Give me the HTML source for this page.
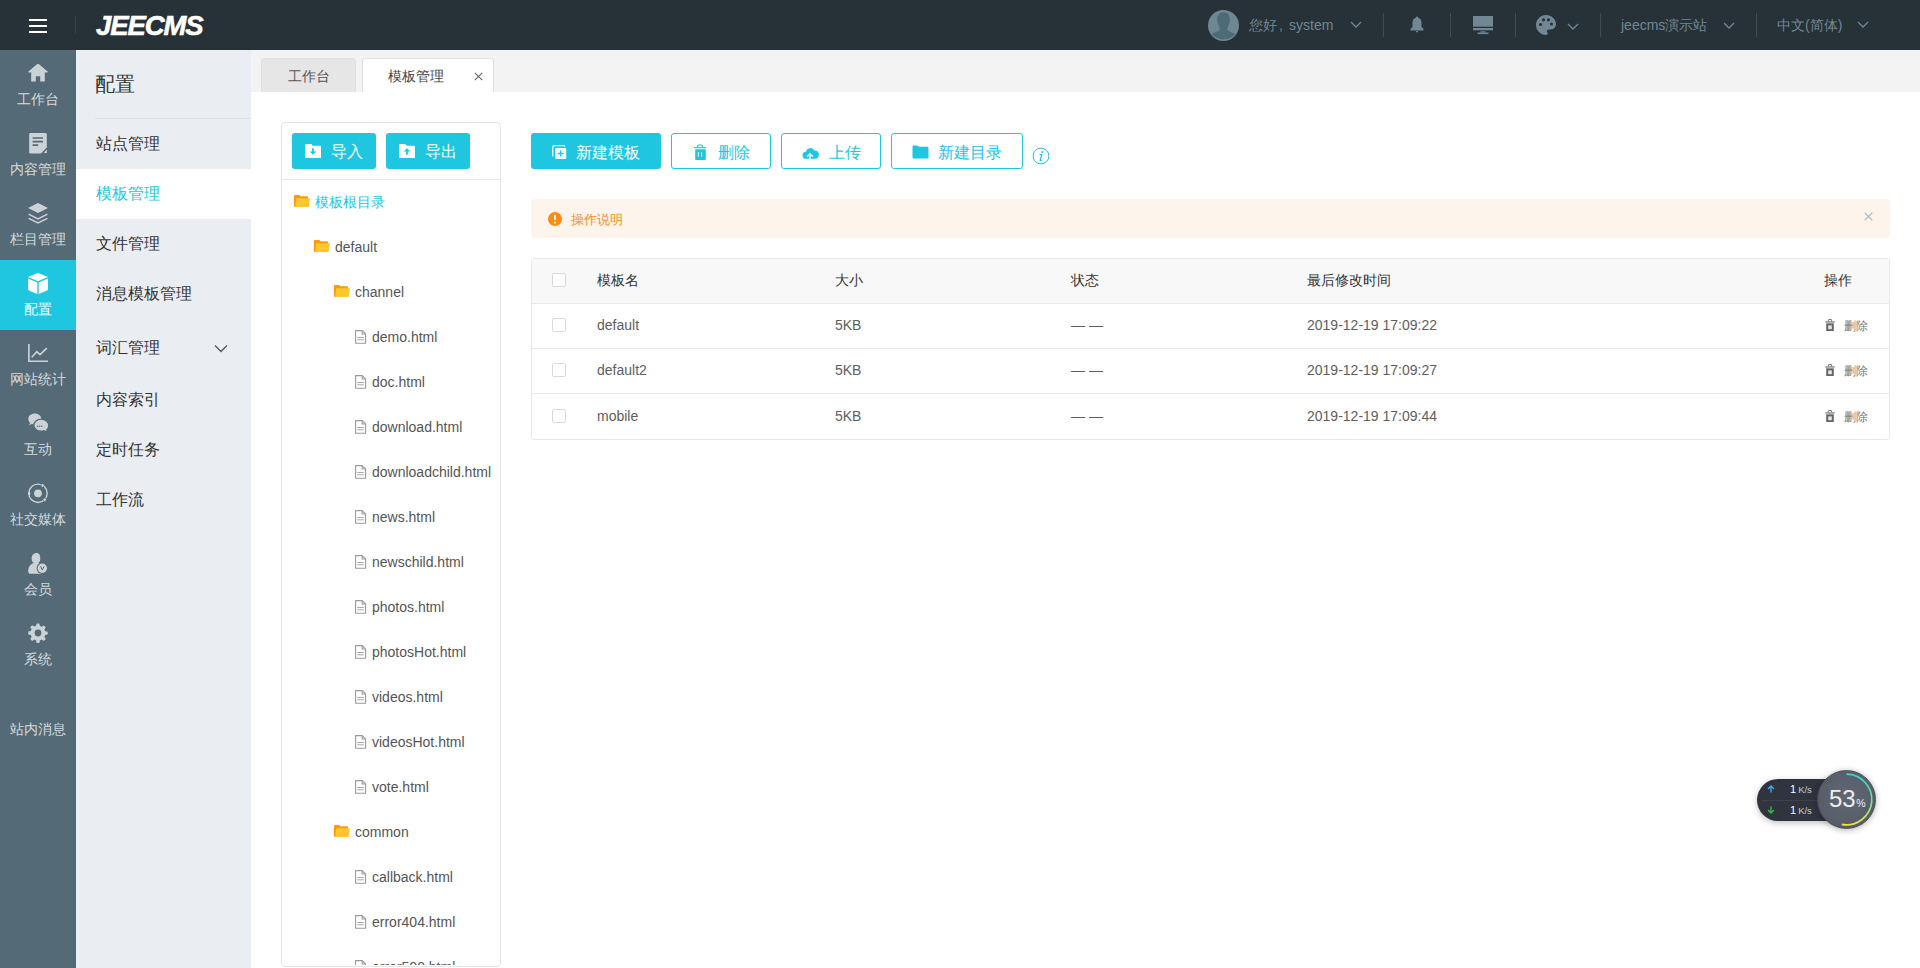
<!DOCTYPE html>
<html><head><meta charset="utf-8">
<style>
*{box-sizing:border-box;margin:0;padding:0}
html,body{width:1920px;height:968px;overflow:hidden;background:#fff;font-family:"Liberation Sans",sans-serif;color:#333}
.abs{position:absolute}
#hdr{position:absolute;left:0;top:0;width:1920px;height:50px;background:#263138}
#side{position:absolute;left:0;top:50px;width:76px;height:918px;background:#546a76}
#side2{position:absolute;left:76px;top:50px;width:175px;height:918px;background:#eaeef2}
#tabs{position:absolute;left:251px;top:50px;width:1669px;height:42px;background:#f3f3f3}
.nav{position:absolute;left:0;width:76px;height:70px;color:#d4dadd;font-size:14px;text-align:center}
.nav .lbl{position:absolute;left:0;width:76px;top:39.5px;line-height:18px}
.nav svg{position:absolute;left:28px;top:13.5px}
.s2{position:absolute;left:96px;font-size:16px;color:#333;line-height:20px;padding-top:1px}
.btn{position:absolute;top:133px;height:36px;border-radius:3px;font-size:16px;line-height:36px}
.btn span{padding-top:2px}
.fill{background:#1ec6df;color:#fff}
.out{border:1px solid #1ec6df;color:#1ec6df;line-height:34px}
.tr{position:absolute;font-size:14px;color:#555;line-height:18px;padding-top:1px}
.th{position:absolute;font-size:14px;color:#333;line-height:18px}
.td{position:absolute;font-size:14px;color:#5e5e5e;line-height:18px}
.cb{position:absolute;left:552px;width:14px;height:14px;border:1px solid #d9d9d9;border-radius:2px;background:#fff}
</style></head><body>
<div id="hdr">
 <div class="abs" style="left:29px;top:19px;width:18px;height:2px;background:#fff"></div>
 <div class="abs" style="left:29px;top:25px;width:18px;height:2px;background:#fff"></div>
 <div class="abs" style="left:29px;top:31px;width:18px;height:2px;background:#fff"></div>
 <div class="abs" style="left:75px;top:16px;width:1px;height:18px;background:#34424a"></div>
 <div class="abs" style="left:96px;top:10px;font-size:27.5px;font-weight:bold;font-style:italic;color:#fff;line-height:31px;letter-spacing:-1.1px;-webkit-text-stroke:0.6px #fff">JEECMS</div>
 <svg class="abs" style="left:1208px;top:10px" width="31" height="31" viewBox="0 0 31 31"><circle cx="15.5" cy="15.5" r="15.5" fill="#6e8793"/><path d="M15.5 2.2C11.3 2.2 9.2 5 9.2 9.2c0 2.4.5 4.3 1.3 5.8.7 1.4 1 2.6 1 4.2v1.2L3.6 24A15.5 15.5 0 0 0 27.4 24l-7.9-3.6v-1.2c0-1.6.3-2.8 1-4.2.8-1.5 1.3-3.4 1.3-5.8 0-4.2-2.1-7-6.3-7z" fill="#4f6a77"/></svg>
 <div class="abs" style="left:1249px;top:16px;font-size:14px;color:#718894;line-height:18px">您好<span style="display:inline-block;width:12px;padding-left:2px">,</span>system</div>
 <svg class="abs" style="left:1350px;top:21px" width="12" height="8" viewBox="0 0 12 8"><path d="M1 1l5 5 5-5" fill="none" stroke="#718894" stroke-width="1.3"/></svg>
 <div class="abs" style="left:1383px;top:13px;width:1px;height:24px;background:#3e4d55"></div>
 <svg class="abs" style="left:1410px;top:16px" width="14" height="18" viewBox="0 0 14 18"><circle cx="7" cy="1.6" r="1.1" fill="#718894"/><path d="M7 1.5c-2.9 0-4.5 2.3-4.5 5.2v4.4L.5 12.8v1.6h13v-1.6l-2-1.7V6.7C11.5 3.8 9.9 1.5 7 1.5z" fill="#718894"/><path d="M5.6 15h2.8L7 16.8z" fill="#718894"/></svg>
 <div class="abs" style="left:1450px;top:13px;width:1px;height:24px;background:#3e4d55"></div>
 <svg class="abs" style="left:1473px;top:16px" width="20" height="19" viewBox="0 0 20 19"><rect x="0" y="0" width="20" height="10.7" fill="#718894"/><rect x="0" y="12" width="20" height="2.3" fill="#718894"/><rect x="7.5" y="15.3" width="5" height="1.2" fill="#718894"/><rect x="4.5" y="16.5" width="11" height="1.6" fill="#718894"/></svg>
 <div class="abs" style="left:1515px;top:13px;width:1px;height:24px;background:#3e4d55"></div>
 <svg class="abs" style="left:1536px;top:15px" width="20" height="20" viewBox="0 0 20 20"><path d="M10 0C4.5 0 0 4.5 0 10s4.5 10 10 10c1 0 1.7-.8 1.7-1.7 0-.4-.2-.8-.4-1.1-.3-.3-.4-.7-.4-1.1 0-.9.8-1.7 1.7-1.7h2C18 14.4 20 12 20 9 20 4 15.5 0 10 0z" fill="#718894"/><circle cx="4.5" cy="9.5" r="1.6" fill="#263138"/><circle cx="7.5" cy="4.8" r="1.6" fill="#263138"/><circle cx="12.5" cy="4.8" r="1.6" fill="#263138"/><circle cx="15.5" cy="9" r="1.6" fill="#263138"/></svg>
 <svg class="abs" style="left:1567px;top:23px" width="12" height="8" viewBox="0 0 12 8"><path d="M1 1l5 5 5-5" fill="none" stroke="#718894" stroke-width="1.3"/></svg>
 <div class="abs" style="left:1600px;top:13px;width:1px;height:24px;background:#3e4d55"></div>
 <div class="abs" style="left:1621px;top:16px;font-size:14px;color:#718894;line-height:18px">jeecms演示站</div>
 <svg class="abs" style="left:1723px;top:21.5px" width="12" height="8" viewBox="0 0 12 8"><path d="M1 1l5 5 5-5" fill="none" stroke="#718894" stroke-width="1.3"/></svg>
 <div class="abs" style="left:1756px;top:13px;width:1px;height:24px;background:#3e4d55"></div>
 <div class="abs" style="left:1777px;top:16px;font-size:14px;color:#718894;line-height:18px">中文(简体)</div>
 <svg class="abs" style="left:1857px;top:21px" width="12" height="8" viewBox="0 0 12 8"><path d="M1 1l5 5 5-5" fill="none" stroke="#718894" stroke-width="1.3"/></svg>
</div>
<div id="side">
 <div class="nav" style="top:0px"><svg style="top:13px" width="20" height="20" viewBox="0 0 20 20"><path d="M10 .8q.6 0 1 .4l8.6 7.4q.5.8-.4.8h-2.4v9.2h-4.6v-5.4H7.8v5.4H3.2V9.4H.8q-.9 0-.4-.8L9 1.2q.4-.4 1-.4z" fill="#ccd3d7"/></svg><div class="lbl">工作台</div></div>
 <div class="nav" style="top:70px"><svg style="top:13px" width="20" height="21" viewBox="0 0 20 21"><path d="M2.6 0h14.8Q18.8 0 18.8 1.4V14.2L13 20.6H2.6Q1.2 20.6 1.2 19.2V1.4Q1.2 0 2.6 0z" fill="#ccd3d7"/><path d="M4.6 5h10.4M4.6 8.6h10.4M4.6 12.2h5.6" stroke="#546a76" stroke-width="1.7"/><path d="M19.4 15.2v5.6q0 .4-.4.4h-5.4z" fill="#546a76"/><path d="M18.8 16.6v3.4h-3.2z" fill="#ccd3d7"/></svg><div class="lbl">内容管理</div></div>
 <div class="nav" style="top:140px"><svg style="top:13px" width="20" height="21" viewBox="0 0 20 21"><path d="M10 0l10 5-10 5L0 5z" fill="#ccd3d7"/><path d="M.6 11.2L10 15.8l9.4-4.6M.6 15.4L10 20l9.4-4.6" fill="none" stroke="#ccd3d7" stroke-width="1.5"/></svg><div class="lbl">栏目管理</div></div>
 <div class="nav" style="top:210px;background:#1ec6df;color:#fff"><svg style="top:12.5px" width="20" height="21" viewBox="0 0 20 21"><path d="M10 0L20 4.1 10 8.3 0 4.1z" fill="#fff"/><path d="M0 5.6l9.3 3.9V21L.9 17.4Q0 17 0 16z" fill="#fff"/><path d="M20 5.6l-9.3 3.9V21l8.4-3.6Q20 17 20 16z" fill="#fff"/></svg><div class="lbl">配置</div></div>
 <div class="nav" style="top:280px"><svg style="top:13.5px" width="20" height="18" viewBox="0 0 20 18"><path d="M.9 0v17.2H20" fill="none" stroke="#ccd3d7" stroke-width="1.6"/><path d="M3.8 13.2l5-5.6 3.2 3 6.8-6.4" fill="none" stroke="#ccd3d7" stroke-width="1.6"/></svg><div class="lbl">网站统计</div></div>
 <div class="nav" style="top:350px"><svg style="top:13px" width="21" height="20" viewBox="0 0 21 20"><path d="M6.8 0.6C3.2 0.6 0.3 3 0.3 6c0 1.6.8 3 2 4L.6 12.1l3.6-1.2c.8.3 1.7.4 2.6.4 3.6 0 6.5-2.4 6.5-5.3S10.4.6 6.8.6z" fill="#ccd3d7"/><path d="M13.2 6.2c-4.1 0-7.4 2.7-7.4 6s3.3 6 7.4 6c.9 0 1.8-.1 2.6-.4l4.4 1.6-1.4-2.6c1.2-1.1 1.9-2.6 1.9-4.6 0-3.3-3.4-6-7.5-6z" fill="#ccd3d7" stroke="#546a76" stroke-width="1.3"/><circle cx="9.6" cy="13.2" r=".75" fill="#546a76"/><circle cx="11.7" cy="13.2" r=".75" fill="#546a76"/><circle cx="13.8" cy="13.2" r=".75" fill="#546a76"/></svg><div class="lbl">互动</div></div>
 <div class="nav" style="top:420px"><svg style="top:13px" width="21" height="21" viewBox="0 0 21 21"><circle cx="10" cy="10.3" r="9.2" fill="none" stroke="#ccd3d7" stroke-width="1.4"/><circle cx="10" cy="10.3" r="3.9" fill="#ccd3d7"/><circle cx="14.6" cy="2.4" r="1.7" fill="#ccd3d7" stroke="#546a76" stroke-width=".6"/><circle cx="0.9" cy="10.3" r="1.5" fill="#ccd3d7"/><circle cx="16.7" cy="16.7" r="1.7" fill="#ccd3d7" stroke="#546a76" stroke-width=".6"/></svg><div class="lbl">社交媒体</div></div>
 <div class="nav" style="top:490px"><svg style="top:12.5px" width="20" height="21" viewBox="0 0 20 21"><path d="M8.4 0C5.6 0 3.6 2.3 3.6 5.4c0 2 .8 3.7 2.1 4.7C2.6 11.2.6 13.6.2 17c-.2 1.6.2 3.8 1.8 3.8h11.6c1.6 0 2-1 2-3.4 0-3.6-2-6.2-5.4-7.3 1.3-1 2.1-2.7 2.1-4.7C12.3 2.3 11.2 0 8.4 0z" fill="#ccd3d7"/><circle cx="14.3" cy="15.3" r="5.7" fill="#546a76"/><circle cx="14.3" cy="15.3" r="4.7" fill="#ccd3d7"/><path d="M12.6 13.4l1.7 3.6 1.7-3.6" fill="none" stroke="#546a76" stroke-width="1"/></svg><div class="lbl">会员</div></div>
 <div class="nav" style="top:560px"><svg style="top:12.5px" width="20" height="20" viewBox="0 0 20 20"><path d="M8.6 0.5h2.8l.5 2.5 1.8.8 2.1-1.4 2 2-1.4 2.1.8 1.8 2.5.5v2.8l-2.5.5-.8 1.8 1.4 2.1-2 2-2.1-1.4-1.8.8-.5 2.5H8.6l-.5-2.5-1.8-.8-2.1 1.4-2-2 1.4-2.1-.8-1.8-2.5-.5V8.6l2.5-.5.8-1.8-1.4-2.1 2-2 2.1 1.4 1.8-.8z" fill="#ccd3d7"/><circle cx="10" cy="10" r="3.4" fill="#546a76"/></svg><div class="lbl">系统</div></div>
 <div class="nav" style="top:630px"><div class="lbl" style="top:40px">站内消息</div></div>
</div>
<div id="side2">
 <div class="abs" style="left:19px;top:22px;font-size:20px;color:#333;line-height:24px">配置</div>
 <div class="abs" style="left:19px;top:68px;width:156px;height:1px;background:#dde2e6"></div>
 <div class="abs" style="left:0;top:119px;width:175px;height:50px;background:#fff"></div>
</div>
<div class="s2" style="top:133px">站点管理</div>
<div class="s2" style="top:183px;color:#1ec6df">模板管理</div>
<div class="s2" style="top:233px">文件管理</div>
<div class="s2" style="top:283px">消息模板管理</div>
<div class="s2" style="top:337px">词汇管理</div>
<svg class="abs" style="left:214px;top:344px" width="14" height="9" viewBox="0 0 14 9"><path d="M1 1.5l6 6 6-6" fill="none" stroke="#555" stroke-width="1.3"/></svg>
<div class="s2" style="top:389px">内容索引</div>
<div class="s2" style="top:439px">定时任务</div>
<div class="s2" style="top:489px">工作流</div>
<div id="tabs">
 <div class="abs" style="left:10px;top:8px;width:95px;height:34px;background:#e6e6e6;border:1px solid #e0e0e0;border-bottom:none;border-radius:4px 4px 0 0;font-size:14px;color:#555;text-align:center;line-height:34px">工作台</div>
 <div class="abs" style="left:111px;top:8px;width:132px;height:34px;background:#fff;border:1px solid #e0e0e0;border-bottom:none;border-radius:4px 4px 0 0;font-size:14px;color:#444;line-height:34px"><span class="abs" style="left:25px;top:0">模板管理</span><svg class="abs" style="left:111px;top:13px" width="9" height="9" viewBox="0 0 9 9"><path d="M.8 .8l7.4 7.4M8.2 .8L.8 8.2" stroke="#666" stroke-width="1.1"/></svg></div>
</div>
<div class="abs" style="left:281px;top:122px;width:220px;height:845px;border:1px solid #e5e5e5;border-radius:4px;background:#fff"></div>
<div class="abs" style="left:0;top:0;width:1920px;height:965px;overflow:hidden">
<div class="abs" style="left:282px;top:179px;width:218px;height:1px;background:#e8e8e8"></div>
<div class="btn fill" style="left:292px;width:84px"><svg class="abs" style="left:13px;top:11px" width="16" height="14" viewBox="0 0 16 14"><path d="M0 0.6Q0 0 .6 0h5.6l1.6 1.8h7.6q.6 0 .6.6V13.4q0 .6-.6.6H.6Q0 14 0 13.4z" fill="#fff"/><path d="M7.1 4.2h1.8v3.2h2.4L8 10.8 4.7 7.4h2.4z" fill="#1ec6df"/></svg><span class="abs" style="left:39px;top:0;padding-top:1px">导入</span></div>
<div class="btn fill" style="left:386px;width:84px"><svg class="abs" style="left:13px;top:11px" width="16" height="14" viewBox="0 0 16 14"><path d="M0 0.6Q0 0 .6 0h5.6l1.6 1.8h7.6q.6 0 .6.6V13.4q0 .6-.6.6H.6Q0 14 0 13.4z" fill="#fff"/><path d="M7.1 10.8h1.8V7.6h2.4L8 4.2 4.7 7.6h2.4z" fill="#1ec6df"/></svg><span class="abs" style="left:39px;top:0;padding-top:1px">导出</span></div>
<svg class="abs" style="left:294px;top:195px" width="16" height="12" viewBox="0 0 16 12"><path d="M0 1Q0 0 1 0h4.2l1.3 1.2H13q1 0 1 1V12H1q-1 0-1-1z" fill="#fb9a0c"/><path d="M2.2 3.2H15.3q.8 0 .6.8L14.6 12H1.2z" fill="#ffc72e"/></svg>
<div class="tr" style="left:315px;top:192px;color:#1ec6df">模板根目录</div>
<svg class="abs" style="left:314px;top:240px" width="16" height="12" viewBox="0 0 16 12"><path d="M0 1Q0 0 1 0h4.2l1.3 1.2H13q1 0 1 1V12H1q-1 0-1-1z" fill="#fb9a0c"/><path d="M2.2 3.2H15.3q.8 0 .6.8L14.6 12H1.2z" fill="#ffc72e"/></svg>
<div class="tr" style="left:335px;top:237px">default</div>
<svg class="abs" style="left:334px;top:285px" width="16" height="12" viewBox="0 0 16 12"><path d="M0 1Q0 0 1 0h4.2l1.3 1.2H13q1 0 1 1V12H1q-1 0-1-1z" fill="#fb9a0c"/><path d="M2.2 3.2H15.3q.8 0 .6.8L14.6 12H1.2z" fill="#ffc72e"/></svg>
<div class="tr" style="left:355px;top:282px">channel</div>
<svg class="abs" style="left:355px;top:330px" width="12" height="14" viewBox="0 0 12 14"><path d="M0.6 0.6H7.2L10.6 4V13.2H0.6z" fill="none" stroke="#9a9a9a" stroke-width="1.1" stroke-linejoin="round"/><path d="M7.2 0.6V4H10.6" fill="none" stroke="#9a9a9a" stroke-width="1.1"/><path d="M2.2 7.5h6.6M2.2 9.8h6.6" stroke="#aaa" stroke-width="1"/></svg>
<div class="tr" style="left:372px;top:327px">demo.html</div>
<svg class="abs" style="left:355px;top:375px" width="12" height="14" viewBox="0 0 12 14"><path d="M0.6 0.6H7.2L10.6 4V13.2H0.6z" fill="none" stroke="#9a9a9a" stroke-width="1.1" stroke-linejoin="round"/><path d="M7.2 0.6V4H10.6" fill="none" stroke="#9a9a9a" stroke-width="1.1"/><path d="M2.2 7.5h6.6M2.2 9.8h6.6" stroke="#aaa" stroke-width="1"/></svg>
<div class="tr" style="left:372px;top:372px">doc.html</div>
<svg class="abs" style="left:355px;top:420px" width="12" height="14" viewBox="0 0 12 14"><path d="M0.6 0.6H7.2L10.6 4V13.2H0.6z" fill="none" stroke="#9a9a9a" stroke-width="1.1" stroke-linejoin="round"/><path d="M7.2 0.6V4H10.6" fill="none" stroke="#9a9a9a" stroke-width="1.1"/><path d="M2.2 7.5h6.6M2.2 9.8h6.6" stroke="#aaa" stroke-width="1"/></svg>
<div class="tr" style="left:372px;top:417px">download.html</div>
<svg class="abs" style="left:355px;top:465px" width="12" height="14" viewBox="0 0 12 14"><path d="M0.6 0.6H7.2L10.6 4V13.2H0.6z" fill="none" stroke="#9a9a9a" stroke-width="1.1" stroke-linejoin="round"/><path d="M7.2 0.6V4H10.6" fill="none" stroke="#9a9a9a" stroke-width="1.1"/><path d="M2.2 7.5h6.6M2.2 9.8h6.6" stroke="#aaa" stroke-width="1"/></svg>
<div class="tr" style="left:372px;top:462px">downloadchild.html</div>
<svg class="abs" style="left:355px;top:510px" width="12" height="14" viewBox="0 0 12 14"><path d="M0.6 0.6H7.2L10.6 4V13.2H0.6z" fill="none" stroke="#9a9a9a" stroke-width="1.1" stroke-linejoin="round"/><path d="M7.2 0.6V4H10.6" fill="none" stroke="#9a9a9a" stroke-width="1.1"/><path d="M2.2 7.5h6.6M2.2 9.8h6.6" stroke="#aaa" stroke-width="1"/></svg>
<div class="tr" style="left:372px;top:507px">news.html</div>
<svg class="abs" style="left:355px;top:555px" width="12" height="14" viewBox="0 0 12 14"><path d="M0.6 0.6H7.2L10.6 4V13.2H0.6z" fill="none" stroke="#9a9a9a" stroke-width="1.1" stroke-linejoin="round"/><path d="M7.2 0.6V4H10.6" fill="none" stroke="#9a9a9a" stroke-width="1.1"/><path d="M2.2 7.5h6.6M2.2 9.8h6.6" stroke="#aaa" stroke-width="1"/></svg>
<div class="tr" style="left:372px;top:552px">newschild.html</div>
<svg class="abs" style="left:355px;top:600px" width="12" height="14" viewBox="0 0 12 14"><path d="M0.6 0.6H7.2L10.6 4V13.2H0.6z" fill="none" stroke="#9a9a9a" stroke-width="1.1" stroke-linejoin="round"/><path d="M7.2 0.6V4H10.6" fill="none" stroke="#9a9a9a" stroke-width="1.1"/><path d="M2.2 7.5h6.6M2.2 9.8h6.6" stroke="#aaa" stroke-width="1"/></svg>
<div class="tr" style="left:372px;top:597px">photos.html</div>
<svg class="abs" style="left:355px;top:645px" width="12" height="14" viewBox="0 0 12 14"><path d="M0.6 0.6H7.2L10.6 4V13.2H0.6z" fill="none" stroke="#9a9a9a" stroke-width="1.1" stroke-linejoin="round"/><path d="M7.2 0.6V4H10.6" fill="none" stroke="#9a9a9a" stroke-width="1.1"/><path d="M2.2 7.5h6.6M2.2 9.8h6.6" stroke="#aaa" stroke-width="1"/></svg>
<div class="tr" style="left:372px;top:642px">photosHot.html</div>
<svg class="abs" style="left:355px;top:690px" width="12" height="14" viewBox="0 0 12 14"><path d="M0.6 0.6H7.2L10.6 4V13.2H0.6z" fill="none" stroke="#9a9a9a" stroke-width="1.1" stroke-linejoin="round"/><path d="M7.2 0.6V4H10.6" fill="none" stroke="#9a9a9a" stroke-width="1.1"/><path d="M2.2 7.5h6.6M2.2 9.8h6.6" stroke="#aaa" stroke-width="1"/></svg>
<div class="tr" style="left:372px;top:687px">videos.html</div>
<svg class="abs" style="left:355px;top:735px" width="12" height="14" viewBox="0 0 12 14"><path d="M0.6 0.6H7.2L10.6 4V13.2H0.6z" fill="none" stroke="#9a9a9a" stroke-width="1.1" stroke-linejoin="round"/><path d="M7.2 0.6V4H10.6" fill="none" stroke="#9a9a9a" stroke-width="1.1"/><path d="M2.2 7.5h6.6M2.2 9.8h6.6" stroke="#aaa" stroke-width="1"/></svg>
<div class="tr" style="left:372px;top:732px">videosHot.html</div>
<svg class="abs" style="left:355px;top:780px" width="12" height="14" viewBox="0 0 12 14"><path d="M0.6 0.6H7.2L10.6 4V13.2H0.6z" fill="none" stroke="#9a9a9a" stroke-width="1.1" stroke-linejoin="round"/><path d="M7.2 0.6V4H10.6" fill="none" stroke="#9a9a9a" stroke-width="1.1"/><path d="M2.2 7.5h6.6M2.2 9.8h6.6" stroke="#aaa" stroke-width="1"/></svg>
<div class="tr" style="left:372px;top:777px">vote.html</div>
<svg class="abs" style="left:334px;top:825px" width="16" height="12" viewBox="0 0 16 12"><path d="M0 1Q0 0 1 0h4.2l1.3 1.2H13q1 0 1 1V12H1q-1 0-1-1z" fill="#fb9a0c"/><path d="M2.2 3.2H15.3q.8 0 .6.8L14.6 12H1.2z" fill="#ffc72e"/></svg>
<div class="tr" style="left:355px;top:822px">common</div>
<svg class="abs" style="left:355px;top:870px" width="12" height="14" viewBox="0 0 12 14"><path d="M0.6 0.6H7.2L10.6 4V13.2H0.6z" fill="none" stroke="#9a9a9a" stroke-width="1.1" stroke-linejoin="round"/><path d="M7.2 0.6V4H10.6" fill="none" stroke="#9a9a9a" stroke-width="1.1"/><path d="M2.2 7.5h6.6M2.2 9.8h6.6" stroke="#aaa" stroke-width="1"/></svg>
<div class="tr" style="left:372px;top:867px">callback.html</div>
<svg class="abs" style="left:355px;top:915px" width="12" height="14" viewBox="0 0 12 14"><path d="M0.6 0.6H7.2L10.6 4V13.2H0.6z" fill="none" stroke="#9a9a9a" stroke-width="1.1" stroke-linejoin="round"/><path d="M7.2 0.6V4H10.6" fill="none" stroke="#9a9a9a" stroke-width="1.1"/><path d="M2.2 7.5h6.6M2.2 9.8h6.6" stroke="#aaa" stroke-width="1"/></svg>
<div class="tr" style="left:372px;top:912px">error404.html</div>
<svg class="abs" style="left:355px;top:960px" width="12" height="14" viewBox="0 0 12 14"><path d="M0.6 0.6H7.2L10.6 4V13.2H0.6z" fill="none" stroke="#9a9a9a" stroke-width="1.1" stroke-linejoin="round"/><path d="M7.2 0.6V4H10.6" fill="none" stroke="#9a9a9a" stroke-width="1.1"/><path d="M2.2 7.5h6.6M2.2 9.8h6.6" stroke="#aaa" stroke-width="1"/></svg>
<div class="tr" style="left:372px;top:957px">error500.html</div>
</div>
<div class="btn fill" style="left:531px;width:130px"><svg class="abs" style="left:21px;top:12px" width="16" height="15" viewBox="0 0 16 15"><path d="M0.8 11.5V2.2Q0.8 0.6 2.4 0.6H11.6Q12.4 0.6 12.6 1.6" fill="none" stroke="#fff" stroke-width="1.2"/><rect x="3.2" y="3.1" width="11" height="10.8" rx="1.2" fill="#fff"/><path d="M8.7 5.6v5.8M5.8 8.5h5.8" stroke="#1ec6df" stroke-width="1.3"/></svg><span class="abs" style="left:45px;top:0">新建模板</span></div>
<div class="btn out" style="left:671px;width:100px"><svg class="abs" style="left:21px;top:10px" width="14" height="17" viewBox="0 0 14 17"><path d="M4.6 3.6V2.2Q4.6 1 5.8 1h2.4Q9.4 1 9.4 2.2v1.4" fill="none" stroke="#1ec6df" stroke-width="1.2"/><path d="M0.8 3.7h12.4" stroke="#1ec6df" stroke-width="1.1"/><rect x="2.2" y="5.2" width="10.6" height="10.8" rx="0.8" fill="#1ec6df"/><path d="M5.4 8.3v4.4M8.6 8.3v4.4" stroke="#fff" stroke-width="1"/></svg><span class="abs" style="left:46px;top:0">删除</span></div>
<div class="btn out" style="left:781px;width:100px"><svg class="abs" style="left:20px;top:13px" width="17" height="12" viewBox="0 0 17 12"><path d="M4.2 11.8A3.5 3.5 0 0 1 3.9 4.8 4.6 4.6 0 0 1 12.5 3.6 3.8 3.8 0 0 1 13 11.8z" fill="#1ec6df"/><path d="M8 12V6.8M5.2 9.6L8 6.8l2.8 2.8" fill="none" stroke="#e6f8fb" stroke-width="1.5"/></svg><span class="abs" style="left:47px;top:0">上传</span></div>
<div class="btn out" style="left:891px;width:132px"><svg class="abs" style="left:20px;top:11px" width="17" height="14" viewBox="0 0 17 14"><path d="M0.5 1.5Q0.5 0.5 1.5 0.5h4l1.2 1.2h8.8Q16.5 1.7 16.5 2.8V12.5Q16.5 13.5 15.5 13.5H1.5Q0.5 13.5 0.5 12.5z" fill="#1ec6df"/></svg><span class="abs" style="left:46px;top:0">新建目录</span></div>
<svg class="abs" style="left:1032px;top:147px" width="18" height="18" viewBox="0 0 18 18"><circle cx="9" cy="9" r="7.9" fill="none" stroke="#1ec6df" stroke-width="1"/><circle cx="10.3" cy="4.9" r="1" fill="#1ec6df"/><path d="M7.6 7.6h2.2l-1.5 5.2q-.2.8.6.6l.9-.3" fill="none" stroke="#1ec6df" stroke-width="1.3"/></svg>

<div class="abs" style="left:531px;top:199px;width:1359px;height:39px;background:#fdf4eb;border-radius:3px"></div>
<svg class="abs" style="left:548px;top:212px" width="14" height="14" viewBox="0 0 14 14"><circle cx="7" cy="7" r="7" fill="#fa8c16"/><path d="M7 3v5" stroke="#fff" stroke-width="1.8"/><circle cx="7" cy="10.5" r="1" fill="#fff"/></svg>
<div class="abs" style="left:571px;top:211px;font-size:13px;color:#fa8c16;line-height:17px">操作说明</div>
<svg class="abs" style="left:1864px;top:212px" width="9" height="9" viewBox="0 0 9 9"><path d="M.7 .7l7.6 7.6M8.3 .7l-7.6 7.6" stroke="#b9bcc0" stroke-width="1.3"/></svg>

<div class="abs" style="left:531px;top:258px;width:1359px;height:182px;border:1px solid #e8e8e8;border-radius:3px;background:#fff"></div>
<div class="abs" style="left:532px;top:259px;width:1357px;height:44px;background:#f8f8f8"></div>
<div class="abs" style="left:532px;top:303px;width:1357px;height:1px;background:#e8e8e8"></div>
<div class="abs" style="left:532px;top:348px;width:1357px;height:1px;background:#e8e8e8"></div>
<div class="abs" style="left:532px;top:393px;width:1357px;height:1px;background:#e8e8e8"></div>
<div class="cb" style="top:273px"></div>
<div class="th" style="left:597px;top:271px">模板名</div>
<div class="th" style="left:835px;top:271px">大小</div>
<div class="th" style="left:1071px;top:271px">状态</div>
<div class="th" style="left:1307px;top:271px">最后修改时间</div>
<div class="th" style="left:1824px;top:271px">操作</div>
<div class="cb" style="top:318px"></div><div class="td" style="left:597px;top:316px">default</div><div class="td" style="left:835px;top:316px">5KB</div><div class="td" style="left:1071px;top:316px">— —</div><div class="td" style="left:1307px;top:316px">2019-12-19 17:09:22</div><svg class="abs" style="left:1825px;top:319px" width="10" height="12" viewBox="0 0 10 12"><path d="M3.4 2.2V1.2Q3.4.5 4.1.5h1.8q.7 0 .7.7v1" fill="none" stroke="#666" stroke-width="1"/><path d="M.3 2.4h9.4v1.1H.3z" fill="#666"/><path d="M1.2 4.3h7.6V12H1.2z" fill="#666"/><path d="M3.2 6.4h3.6v3.8H3.2z" fill="#e6e6e6"/></svg><div class="td" style="left:1844px;top:317px;font-size:12px;color:#777">删除</div><div class="cb" style="top:363px"></div><div class="td" style="left:597px;top:361px">default2</div><div class="td" style="left:835px;top:361px">5KB</div><div class="td" style="left:1071px;top:361px">— —</div><div class="td" style="left:1307px;top:361px">2019-12-19 17:09:27</div><svg class="abs" style="left:1825px;top:364px" width="10" height="12" viewBox="0 0 10 12"><path d="M3.4 2.2V1.2Q3.4.5 4.1.5h1.8q.7 0 .7.7v1" fill="none" stroke="#666" stroke-width="1"/><path d="M.3 2.4h9.4v1.1H.3z" fill="#666"/><path d="M1.2 4.3h7.6V12H1.2z" fill="#666"/><path d="M3.2 6.4h3.6v3.8H3.2z" fill="#e6e6e6"/></svg><div class="td" style="left:1844px;top:362px;font-size:12px;color:#777">删除</div><div class="cb" style="top:409px"></div><div class="td" style="left:597px;top:407px">mobile</div><div class="td" style="left:835px;top:407px">5KB</div><div class="td" style="left:1071px;top:407px">— —</div><div class="td" style="left:1307px;top:407px">2019-12-19 17:09:44</div><svg class="abs" style="left:1825px;top:410px" width="10" height="12" viewBox="0 0 10 12"><path d="M3.4 2.2V1.2Q3.4.5 4.1.5h1.8q.7 0 .7.7v1" fill="none" stroke="#666" stroke-width="1"/><path d="M.3 2.4h9.4v1.1H.3z" fill="#666"/><path d="M1.2 4.3h7.6V12H1.2z" fill="#666"/><path d="M3.2 6.4h3.6v3.8H3.2z" fill="#e6e6e6"/></svg><div class="td" style="left:1844px;top:408px;font-size:12px;color:#777">删除</div>
<div class="abs" style="left:1757px;top:779px;width:90px;height:42px;border-radius:21px;background:#30343f;box-shadow:0 2px 6px rgba(0,0,0,.25)"></div>
<div class="abs" style="left:1762px;top:800px;width:60px;height:1px;background:#3d414b"></div>
<svg class="abs" style="left:1767px;top:785px" width="8" height="8" viewBox="0 0 8 8"><path d="M4 7.5V1M1 4l3-3 3 3" fill="none" stroke="#38aef5" stroke-width="1.3"/></svg>
<svg class="abs" style="left:1767px;top:806px" width="8" height="8" viewBox="0 0 8 8"><path d="M4 .5V7M1 4l3 3 3-3" fill="none" stroke="#2ec13d" stroke-width="1.3"/></svg>
<div class="abs" style="left:1790px;top:783px;font-size:11px;color:#fff;line-height:12px">1<span style="font-size:9.5px;color:#ccc;margin-left:2px">K/s</span></div>
<div class="abs" style="left:1790px;top:804px;font-size:11px;color:#fff;line-height:12px">1<span style="font-size:9.5px;color:#ccc;margin-left:2px">K/s</span></div>
<div class="abs" style="left:1817px;top:770px;width:59px;height:59px;border-radius:50%;background:radial-gradient(circle at 50% 45%,#626775 0,#595e6b 60%,#4f535f 100%);border:1px solid #4a4e58;box-shadow:0 1px 6px rgba(0,0,0,.3)"></div>
<svg class="abs" style="left:1817px;top:770px" width="59" height="59" viewBox="0 0 59 59"><defs><linearGradient id="g1" x1="0" y1="0" x2="0" y2="1"><stop offset="0" stop-color="#2fd9d0"/><stop offset="0.55" stop-color="#7be38a"/><stop offset="1" stop-color="#f0e040"/></linearGradient></defs><path d="M29.5 4.199999999999999A25.3 25.3 0 1 1 24.76 54.35" fill="none" stroke="url(#g1)" stroke-width="1.7"/></svg>
<div class="abs" style="left:1829px;top:786px;font-size:24px;color:#eeeeee;line-height:26px;letter-spacing:-0.2px">53<span style="font-size:10.5px;letter-spacing:0;margin-left:1px">%</span></div>

</body></html>
